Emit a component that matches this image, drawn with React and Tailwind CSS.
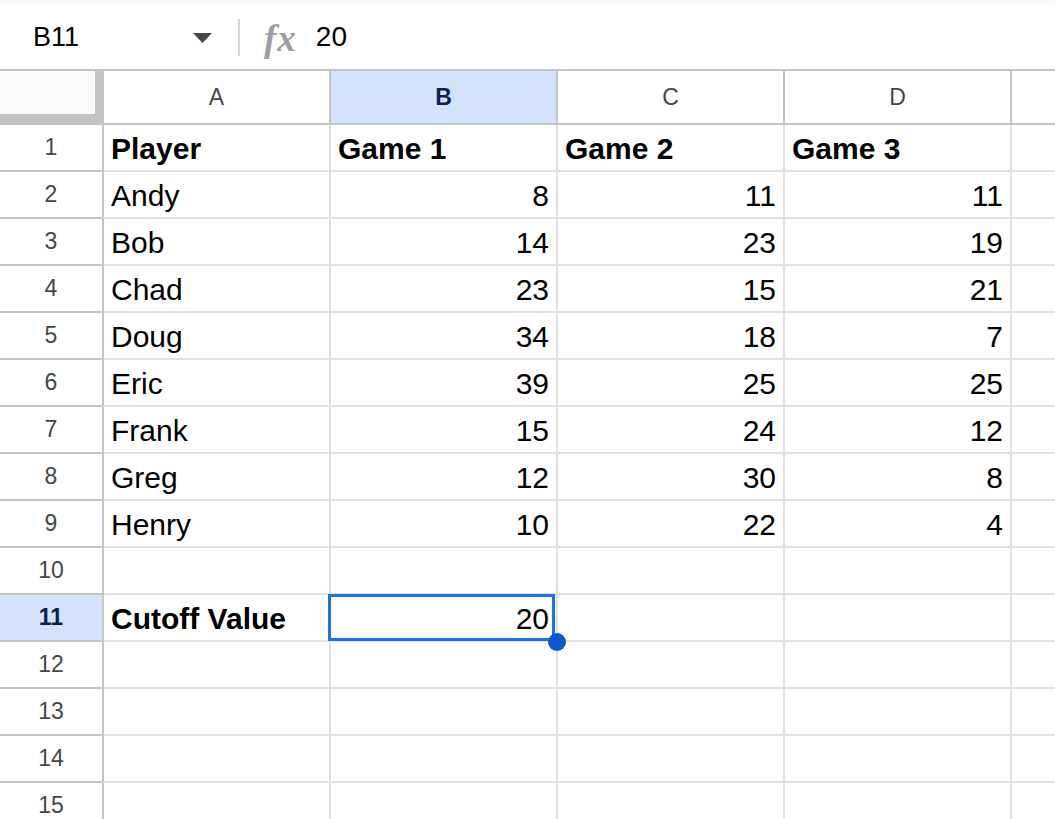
import React from "react";

const rows = [
  { cells: ["Player", "Game 1", "Game 2", "Game 3"], bold: true },
  { cells: ["Andy", 8, 11, 11] },
  { cells: ["Bob", 14, 23, 19] },
  { cells: ["Chad", 23, 15, 21] },
  { cells: ["Doug", 34, 18, 7] },
  { cells: ["Eric", 39, 25, 25] },
  { cells: ["Frank", 15, 24, 12] },
  { cells: ["Greg", 12, 30, 8] },
  { cells: ["Henry", 10, 22, 4] },
  { cells: ["", "", "", ""] },
  { cells: ["Cutoff Value", 20, "", ""], labelBold: true, selected: true },
  { cells: ["", "", "", ""] },
  { cells: ["", "", "", ""] },
  { cells: ["", "", "", ""] },
  { cells: ["", "", "", ""] },
];

const cols = ["A", "B", "C", "D"];

function Cell({ value, bold, isSelected }) {
  const isNum = typeof value === "number";
  return (
    <div
      className={
        "relative w-[227px] shrink-0 h-full border-r-2 border-[#e1e1e1] flex items-end pb-[6px] px-[7px] text-[30px] leading-[30px] text-black whitespace-nowrap " +
        (isNum ? "justify-end " : "justify-start ") +
        (bold ? "font-bold" : "font-normal")
      }
    >
      {value}
      {isSelected && (
        <>
          <div className="absolute -left-[3px] -top-[1px] right-[1px] -bottom-[1px] border-[3px] border-[#1a73e8] pointer-events-none" />
          <div className="absolute left-[217px] top-[38px] w-[18px] h-[18px] rounded-full bg-[#0b57d0] z-10" />
        </>
      )}
    </div>
  );
}

export default function App() {
  return (
    <div
      className="w-[1055px] h-[819px] overflow-hidden bg-white"
      style={{ fontFamily: '"Liberation Sans", Arial, sans-serif' }}
    >
      {/* top strip */}
      <div className="h-[5px] bg-[#f9fbfd]" />
      {/* formula bar */}
      <div className="h-[64px] flex items-center pl-[33px]">
        <div className="w-[160px] text-[27px] leading-[30px] text-black">B11</div>
        <svg width="19" height="10" viewBox="0 0 19 10" className="mt-[2px]">
          <polygon points="0,0 19,0 9.5,10" fill="#444746" />
        </svg>
        <div className="ml-[26px] w-[2px] h-[37px] bg-[#d5d5d5]" />
        <div
          className="ml-[24px] text-[37px] leading-[36px] text-[#9e9e9e] italic font-bold tracking-[1px] mt-[4px]"
          style={{ fontFamily: '"Liberation Serif", "Times New Roman", serif' }}
        >
          fx
        </div>
        <div className="ml-[19px] text-[28px] leading-[30px] text-black">20</div>
      </div>

      {/* column header row */}
      <div className="flex h-[56px] border-t-2 border-b-2 border-[#c4c4c4]">
        <div className="w-[104px] shrink-0 h-full bg-[#c4c4c4]">
          <div className="w-[95px] h-[43px] bg-[#f8f9fa]" />
        </div>
        {cols.map((c) => {
          const sel = c === "B";
          return (
            <div
              key={c}
              className={
                "w-[227px] shrink-0 h-full border-r-2 border-[#c4c4c4] flex items-center justify-center text-[23px] " +
                (sel ? "bg-[#d3e3fd] text-[#0b1f4f] font-bold" : "bg-white text-[#444746]")
              }
            >
              {c}
            </div>
          );
        })}
        <div className="flex-1 h-full bg-white" />
      </div>

      {/* data rows */}
      {rows.map((r, i) => (
        <div key={i} className="flex h-[47px]">
          <div
            className={
              "w-[104px] shrink-0 h-full border-r-2 border-b-2 border-[#c4c4c4] flex items-center justify-center text-[23px] " +
              (r.selected ? "bg-[#d3e3fd] text-[#0b1f4f] font-bold" : "bg-white text-[#444746]")
            }
          >
            {i + 1}
          </div>
          <div className="flex h-full border-b-2 border-[#e1e1e1] flex-1">
            {r.cells.map((v, j) => (
              <Cell
                key={j}
                value={v}
                bold={r.bold || (r.labelBold && j === 0)}
                isSelected={r.selected && j === 1}
              />
            ))}
            <div className="flex-1 h-full" />
          </div>
        </div>
      ))}
    </div>
  );
}
